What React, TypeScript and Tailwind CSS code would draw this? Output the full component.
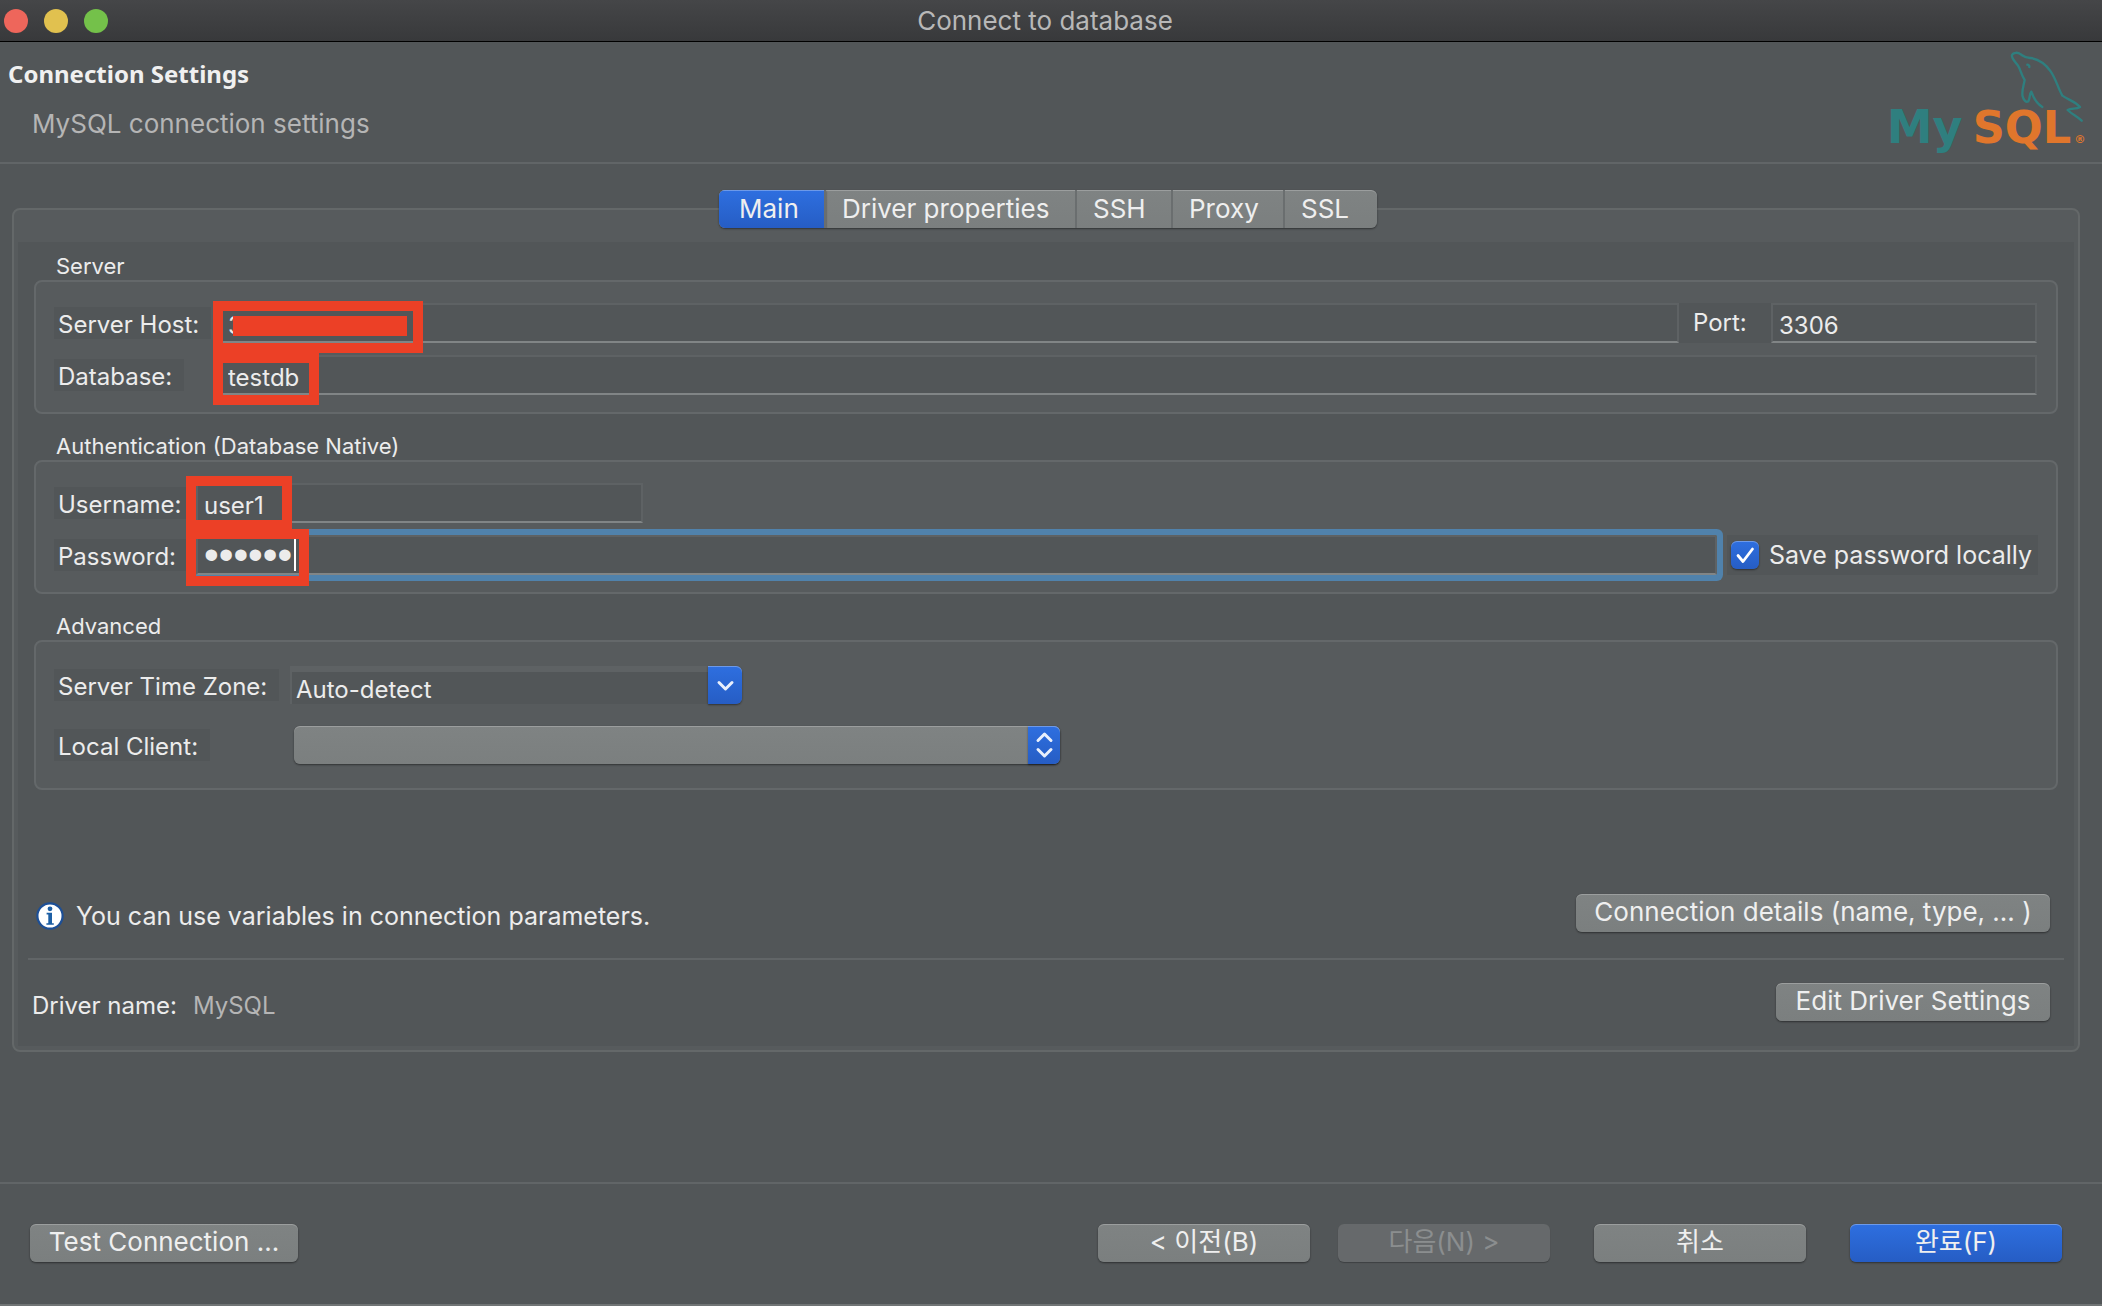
import { useState } from 'react';
import type { ReactNode } from 'react';
import clsx from 'clsx';

const tabs = [
  { name: 'Main', width: 'w-[107px] pl-5' },
  { name: 'Driver properties', width: 'w-[251px] pl-4' },
  { name: 'SSH', width: 'w-[96px] pl-4' },
  { name: 'Proxy', width: 'w-[112px] pl-4' },
  { name: 'SSL', width: 'w-[92px] pl-4' },
];

const inputClass =
  'block h-10 w-full border-2 border-[#5e6264] border-b-[#818586] bg-[#525658] pl-1.5 leading-8 text-[#ececec] outline-none';

const blueFill =
  'bg-linear-to-b from-[#2e6fe0] to-[#265dc4] shadow-[0_1px_2px_rgba(0,0,0,0.45),inset_0_1px_0_rgba(255,255,255,0.3)]';

const greyFill =
  'bg-linear-to-b from-[#7f8383] to-[#7b7f7f] shadow-[0_1px_2px_rgba(0,0,0,0.45),inset_0_1px_0_rgba(255,255,255,0.22)]';

function MySqlLogo() {
  return (
    <svg viewBox="70 60 606 312" className="h-[104px] w-[202px]" role="img" aria-label="MySQL">
      <g fill="none" stroke="#2f7f7f" strokeWidth="7" strokeLinecap="round" strokeLinejoin="round">
        <path d="M545 231 C530 222 518 203 512 185 C506 190 508 207 503 214 C496 219 489 210 486 200 C482 184 489 168 492 150 C482 135 480 119 472 107 C464 96 451 84 454 75 C458 66 473 67 480 73 C489 79 496 85 510 84 C533 88 556 104 570 124 C586 147 591 172 605 197 C622 209 645 215 658 231 C647 239 632 233 621 240 C634 253 648 258 663 272" />
        <path d="M500 104 C503 104 507 107 506 111" />
      </g>
      <g className="font-['DejaVu_Sans',sans-serif] font-bold">
        <text x="78" y="340" fontSize="138" fill="#2f7f7f">My</text>
        <text x="336" y="340" fontSize="134" fill="#e0762c">SQL</text>
        <text x="641" y="340" fontSize="34" fill="#e0762c">®</text>
      </g>
    </svg>
  );
}

function PushButton({ children, className, primary = false, disabled = false }: {
  children: ReactNode;
  className?: string;
  primary?: boolean;
  disabled?: boolean;
}) {
  return (
    <button
      type="button"
      disabled={disabled}
      className={clsx(
        'flex h-[38px] items-center justify-center rounded-md pb-0.5 text-[26px] leading-8 whitespace-nowrap',
        disabled && 'bg-[#66696b] text-[#8b8e8f] shadow-[0_1px_1px_rgba(0,0,0,0.25)]',
        !disabled && (primary ? blueFill : greyFill),
        !disabled && 'text-[#efefef]',
        className
      )}
    >
      {children}
    </button>
  );
}

function Group({ title, className, children }: { title: string; className: string; children: ReactNode }) {
  return (
    <section>
      <h2 className="pl-[22px] text-[22px] leading-7 text-[#ececec]">{title}</h2>
      <div className={clsx('rounded-lg border-2 border-[#64686a] bg-[#575b5d] pl-[18px]', className)}>
        {children}
      </div>
    </section>
  );
}

function FieldLabel({ htmlFor, column, children }: { htmlFor: string; column: string; children: ReactNode }) {
  return (
    <div className={clsx('shrink-0', column)}>
      <label
        htmlFor={htmlFor}
        className="block w-fit bg-[#525658] pt-1 pr-3 pl-1 text-[24px] leading-7 whitespace-nowrap text-[#ececec]"
      >
        {children}
      </label>
    </div>
  );
}

// Red frame laid over the part of a field that has to be filled in
function Mark({ className }: { className: string }) {
  return <span className={clsx('pointer-events-none absolute z-10 border-10 border-[#ec4026]', className)} />;
}

export default function App() {
  const [activeTab, setActiveTab] = useState('Main');
  const [savePassword, setSavePassword] = useState(true);

  return (
    <div className="flex min-h-screen flex-col border-b-2 border-[#707475] bg-[#525658] font-[Inter,'Noto_Sans_CJK_KR',sans-serif]">
      {/* Title bar */}
      <div className="relative flex h-[42px] items-center border-b border-black bg-linear-to-b from-[#454648] to-[#38393b] pl-1">
        <div className="flex gap-4">
          <button type="button" aria-label="Close" className="size-6 rounded-full bg-[#ee665b]" />
          <button type="button" aria-label="Minimize" className="size-6 rounded-full bg-[#e1c14f]" />
          <button type="button" aria-label="Zoom" className="size-6 rounded-full bg-[#74c14a]" />
        </div>
        <div className="pointer-events-none absolute inset-x-0 pr-3 text-center text-[26px] leading-8 text-[#b8b8b8]">
          Connect to database
        </div>
      </div>

      {/* Header */}
      <header className="flex h-[122px] justify-between border-b-2 border-[#616567] pr-4 pl-2">
        <div className="pt-3.5">
          <h1 className="font-['Noto_Sans',sans-serif] text-[24px] leading-9 font-bold text-[#f0f0f0]">
            Connection Settings
          </h1>
          <p className="mt-4 pl-6 text-[26px] leading-8 text-[#b5b5b5]">MySQL connection settings</p>
        </div>
        <div className="pt-2">
          <MySqlLogo />
        </div>
      </header>

      <main className="flex-1 pt-[26px] pr-[22px] pb-10 pl-3">
        <div role="tablist" className="relative z-10 -mb-5 flex justify-center pl-1">
          <div className={clsx('flex overflow-hidden rounded-md', greyFill)}>
            {tabs.map((tab) => (
              <button
                key={tab.name}
                type="button"
                role="tab"
                aria-selected={activeTab === tab.name}
                onClick={() => setActiveTab(tab.name)}
                className={clsx(
                  'h-[38px] border-r-2 border-[#6a6e6f] text-left text-[26px] leading-8 whitespace-nowrap text-[#efefef] last:border-r-0',
                  tab.width,
                  activeTab === tab.name && blueFill,
                  activeTab === tab.name && 'border-r-0'
                )}
              >
                {tab.name}
              </button>
            ))}
          </div>
        </div>

        <div className="rounded-lg border-2 border-[#646869] bg-[#575b5d] px-1 pt-8 pb-1">
          <div className="bg-[#525658] px-2.5 pt-2.5 pb-6">
            <form className="flex flex-col gap-[18px] px-1.5" onSubmit={(e) => e.preventDefault()}>
              <Group title="Server" className="flex flex-col gap-3 pt-[21px] pr-[19px] pb-[17px]">
                <div className="flex items-center">
                  <FieldLabel htmlFor="host" column="w-[159px]">Server Host:</FieldLabel>
                  <div className="relative flex-1">
                    <input id="host" type="text" defaultValue="3" className={clsx(inputClass, 'pt-1 pl-[13px] text-[24px]')} />
                    <Mark className="-top-0.5 left-0 h-[52px] w-[210px]" />
                    <span className="pointer-events-none absolute top-[13px] left-5 h-5 w-[174px] bg-[#ec4026]" />
                  </div>
                  <label htmlFor="port" className="w-[92px] bg-[#525658] pl-3.5 text-[24px] leading-10 text-[#ececec]">
                    Port:
                  </label>
                  <div className="w-[266px]">
                    <input id="port" type="text" defaultValue="3306" className={clsx(inputClass, 'pt-1 text-[24px]')} />
                  </div>
                </div>
                <div className="flex items-center">
                  <FieldLabel htmlFor="database" column="w-[159px]">Database:</FieldLabel>
                  <div className="relative flex-1">
                    <input id="database" type="text" defaultValue="testdb" className={clsx(inputClass, 'pt-1 pl-[13px] text-[24px]')} />
                    <Mark className="-top-0.5 left-0 h-[52px] w-[106px]" />
                  </div>
                </div>
              </Group>

              <Group title="Authentication (Database Native)" className="flex flex-col gap-3 pt-[21px] pr-[18px] pb-[17px]">
                <div className="flex items-center">
                  <FieldLabel htmlFor="username" column="w-[142px]">Username:</FieldLabel>
                  <div className="relative w-[447px]">
                    <input id="username" type="text" defaultValue="user1" className={clsx(inputClass, 'pt-1 text-[24px]')} />
                    <Mark className="-top-[7px] -left-2.5 h-[54px] w-[106px]" />
                  </div>
                </div>
                <div className="flex items-center">
                  <FieldLabel htmlFor="password" column="w-[142px]">Password:</FieldLabel>
                  <div className="relative flex-1">
                    <input
                      id="password"
                      type="password"
                      defaultValue="secret"
                      className={clsx(inputClass, "rounded-xs font-['Liberation_Sans',sans-serif] text-[42px] ring-6 ring-[#5082ac]")}
                    />
                    <Mark className="-top-1.5 -left-2.5 h-[57px] w-[123px]" />
                    <span className="pointer-events-none absolute top-1 left-[98px] h-8 w-0.5 bg-white" />
                  </div>
                  <label className="ml-2.5 flex h-10 items-center gap-2.5 bg-[#525658] pr-1.5 pl-1 text-[25px] leading-8 whitespace-nowrap text-[#ececec]">
                    <span className="relative flex">
                      <input
                        type="checkbox"
                        checked={savePassword}
                        onChange={(e) => setSavePassword(e.target.checked)}
                        className={clsx('size-7 appearance-none rounded-md', savePassword ? blueFill : greyFill)}
                      />
                      {savePassword && (
                        <svg viewBox="0 0 28 28" className="pointer-events-none absolute inset-0 size-7" fill="none" stroke="#fff" strokeWidth="2.8" strokeLinecap="round" strokeLinejoin="round">
                          <path d="M7 14.5l5 6L21.5 8" />
                        </svg>
                      )}
                    </span>
                    Save password locally
                  </label>
                </div>
              </Group>

              <Group title="Advanced" className="flex flex-col gap-[22px] pt-6 pb-6">
                <div className="flex items-center">
                  <FieldLabel htmlFor="timezone" column="w-[236px]">Server Time Zone:</FieldLabel>
                  <div className="relative w-[452px]">
                    <select
                      id="timezone"
                      className="block h-[38px] w-full appearance-none rounded-r-md border-2 border-t-6 border-b-0 border-[#5e6264] bg-[#525658] pt-1 pl-1 text-[24px] leading-7 text-[#ececec] outline-none"
                    >
                      <option>Auto-detect</option>
                    </select>
                    <span className={clsx('pointer-events-none absolute inset-y-0 right-0 flex w-[34px] items-center justify-center rounded-r-md', blueFill)}>
                      <svg viewBox="0 0 34 38" className="h-[38px] w-[34px]" fill="none" stroke="#e8effc" strokeWidth="3" strokeLinecap="round" strokeLinejoin="round">
                        <path d="M11 16.5l6.5 6.5 6.5-6.5" />
                      </svg>
                    </span>
                  </div>
                </div>
                <div className="flex items-center">
                  <FieldLabel htmlFor="client" column="w-[240px]">Local Client:</FieldLabel>
                  <div className="relative w-[766px]">
                    <select
                      id="client"
                      className={clsx('block h-[38px] w-full appearance-none rounded-md pl-3 text-[24px] leading-8 text-[#ececec] outline-none', greyFill)}
                    >
                      <option aria-label="None" />
                    </select>
                    <span className={clsx('pointer-events-none absolute inset-y-0 right-0 flex w-8 items-center justify-center rounded-r-md', blueFill)}>
                      <svg viewBox="0 0 32 38" className="h-[38px] w-8" fill="none" stroke="#e8effc" strokeWidth="3" strokeLinecap="round" strokeLinejoin="round">
                        <path d="M10 14.5l6.5-6.5 6.5 6.5M10 23.5l6.5 6.5 6.5-6.5" />
                      </svg>
                    </span>
                  </div>
                </div>
              </Group>
            </form>

            <div className="mt-[104px] flex items-center justify-between pr-3.5 pl-2">
              <div className="flex items-center gap-3 pt-1.5">
                <svg viewBox="0 0 28 28" className="size-7">
                  <circle cx="14" cy="14" r="12.6" fill="#fff" stroke="#1d4f96" strokeWidth="2.2" />
                  <circle cx="14" cy="6.8" r="2.4" fill="#1d5fa5" />
                  <path d="M10.6 10.8h5.4v10.4h1.8v1.6h-7.4v-1.6h1.9v-8.8h-1.7z" fill="#1d5fa5" />
                </svg>
                <p className="text-[25px] leading-8 text-[#ececec]">You can use variables in connection parameters.</p>
              </div>
              <PushButton className="w-[474px]">Connection details (name, type, ... )</PushButton>
            </div>
            <hr className="mt-[26px] mb-[22px] border-t-2 border-[#616567]" />
            <div className="flex items-center justify-between pr-3.5 pl-1">
              <dl className="flex gap-4 pt-2 text-[24px] leading-8">
                <dt className="text-[#ececec]">Driver name:</dt>
                <dd className="text-[#b5b5b5]">MySQL</dd>
              </dl>
              <PushButton className="w-[274px]">Edit Driver Settings</PushButton>
            </div>
          </div>
        </div>
      </main>

      <footer className="flex justify-between border-t-2 border-[#616567] pt-10 pr-10 pb-[42px] pl-[30px]">
        <PushButton className="w-[268px]">Test Connection ...</PushButton>
        <div className="flex gap-11">
          <div className="flex gap-7">
            <PushButton className="w-[212px]">&lt; 이전(B)</PushButton>
            <PushButton className="w-[212px]" disabled>다음(N) &gt;</PushButton>
          </div>
          <PushButton className="w-[212px]">취소</PushButton>
          <PushButton className="w-[212px]" primary>완료(F)</PushButton>
        </div>
      </footer>
    </div>
  );
}
